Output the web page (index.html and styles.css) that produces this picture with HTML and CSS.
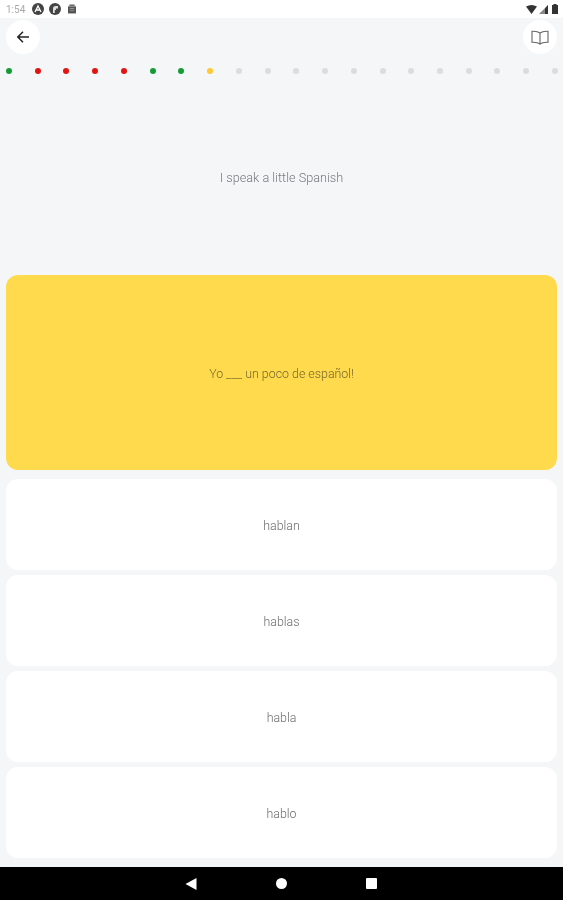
FILE: index.html
```html
<!DOCTYPE html>
<html lang="en">
<head>
<meta charset="utf-8">
<title>Lesson</title>
<link rel="stylesheet" href="styles.css">
</head>
<body>
<div class="screen">
  <div class="status">
    <div class="status-left">
      <span class="time">1:54</span>
      <svg class="s-icon" viewBox="0 0 12 12"><circle cx="6" cy="6" r="6" fill="#444"/><path d="M3 9 6 3l3 6M4.300 7h3.400" fill="none" stroke="#fff" stroke-width="1.300"/></svg>
      <svg class="s-icon" viewBox="0 0 12 12"><circle cx="6" cy="6" r="6" fill="#444"/><path d="M4 10V5.500C4 4 5 3 6.500 3H9v2.500H7V7H5.800V10z" fill="#ddd"/></svg>
      <svg class="s-icon small" viewBox="0 0 9 10"><path d="M0 2h9v8H0z" fill="#555"/><path d="M1.500 0h6v1.500h-6z" fill="#555"/><path d="M2 4h5v1H2zM2 6h5v1H2z" fill="#999"/></svg>
    </div>
    <div class="status-right">
      <svg class="wifi" viewBox="0 0 11 9"><path d="M0 1.500Q5.500-1.500 11 1.500L5.500 9z" fill="#333"/></svg>
      <svg class="signal" viewBox="0 0 9 9"><path d="M0 9 9 0v9z" fill="#888"/><path d="M6 3.500V9h3V0z" fill="#333"/></svg>
      <svg class="battery" viewBox="0 0 6 10"><path d="M1.500 0h3v1H6v9H0V1h1.500z" fill="#333"/></svg>
    </div>
  </div>

  <main class="content">
    <div class="topbar">
      <button class="round-btn" aria-label="Back">
        <svg class="back-icon" viewBox="0 0 14 14"><path d="M13 7H2M7 1.800 1.800 7 7 12.200" fill="none" stroke="#222" stroke-width="1.500"/></svg>
      </button>
      <button class="round-btn" aria-label="Grammar book">
        <svg class="book-icon" viewBox="0 0 18 15"><path d="M9 3Q6.500 1 1 1.300V12.300Q6.500 12 9 14Q11.500 12 17 12.300V1.300Q11.500 1 9 3V14" fill="none" stroke="#666" stroke-width="1.100"/></svg>
      </button>
    </div>

    <div class="dots">
      <span class="dot green"></span>
      <span class="dot red"></span>
      <span class="dot red"></span>
      <span class="dot red"></span>
      <span class="dot red"></span>
      <span class="dot green"></span>
      <span class="dot green"></span>
      <span class="dot yellow"></span>
      <span class="dot"></span>
      <span class="dot"></span>
      <span class="dot"></span>
      <span class="dot"></span>
      <span class="dot"></span>
      <span class="dot"></span>
      <span class="dot"></span>
      <span class="dot"></span>
      <span class="dot"></span>
      <span class="dot"></span>
      <span class="dot"></span>
      <span class="dot"></span>
    </div>

    <div class="prompt">I speak a little Spanish</div>

    <div class="card question">Yo ___ un poco de español!</div>

    <div class="answers">
      <div class="card answer">hablan</div>
      <div class="card answer">hablas</div>
      <div class="card answer">habla</div>
      <div class="card answer">hablo</div>
    </div>
  </main>

  <nav class="navbar">
    <svg class="nav-back" viewBox="0 0 11 12"><path d="M11 0V12L0 6z" fill="#fff"/></svg>
    <span class="nav-home"></span>
    <span class="nav-recent"></span>
  </nav>
</div>
</body>
</html>
```

FILE: styles.css
```css
* { box-sizing: border-box; }
html, body { margin: 0; padding: 0; background: #f5f6f8; }
body { width: 563px; height: 900px; overflow: hidden; font-family: Roboto, "Liberation Sans", sans-serif; }
.screen { width: 563px; height: 900px; display: flex; flex-direction: column; background: #f5f6f8; filter: blur(0.7px); }

.status { height: 18px; flex: none; background: #fff; display: flex; justify-content: space-between; align-items: center; padding: 0 5px 0 6px; }
.status-left { display: flex; align-items: center; gap: 5px; }
.status-right { display: flex; align-items: center; gap: 2px; }
.time { font-size: 10px; color: #aaa; width: 21px; }
.s-icon { width: 12px; height: 12px; display: block; }
.s-icon.small { width: 8px; height: 10px; margin-left: 2px; }
.wifi { width: 11px; height: 9px; display: block; }
.signal { width: 9px; height: 9px; display: block; }
.battery { width: 6px; height: 10px; margin-left: 2px; display: block; }

.content { flex: 1; display: flex; flex-direction: column; padding: 0 6px; min-height: 0; }
.topbar { display: flex; justify-content: space-between; height: 34px; margin-top: 2px; flex: none; }
.round-btn { width: 34px; height: 34px; border-radius: 50%; border: 0; padding: 0; background: #fff; display: flex; align-items: center; justify-content: center; }
.back-icon { width: 14px; height: 14px; display: block; }
.book-icon { width: 18px; height: 15px; display: block; }

.dots { display: flex; justify-content: space-between; margin: 14px -1px 0 0; height: 6px; flex: none; }
.dot { width: 6px; height: 6px; border-radius: 50%; background: #dcdcdc; }
.dot.green { background: #149c36; }
.dot.red { background: #e3130f; }
.dot.yellow { background: #fdc92f; }

.prompt { height: 201px; flex: none; display: flex; align-items: center; justify-content: center; font-size: 12.7px; font-weight: 300; color: #77797c; padding-top: 5px; }

.card { display: flex; align-items: center; justify-content: center; border-radius: 12px; font-size: 12.4px; font-weight: 300; padding-top: 2px; }
.question { height: 195px; flex: none; background: #ffda4d; color: #77672b; }
.answers { display: flex; flex-direction: column; gap: 5px; margin-top: 9px; }
.answer { height: 91px; background: #fff; color: #6c6c6c; }

.navbar { height: 33px; flex: none; background: #000; display: flex; align-items: center; padding-left: 185px; }
.nav-back { width: 12px; height: 12px; display: block; }
.nav-home { width: 11px; height: 11px; border-radius: 50%; background: #fff; margin-left: 79px; }
.nav-recent { width: 11px; height: 11px; border-radius: 1px; background: #fff; margin-left: 79px; }
```
